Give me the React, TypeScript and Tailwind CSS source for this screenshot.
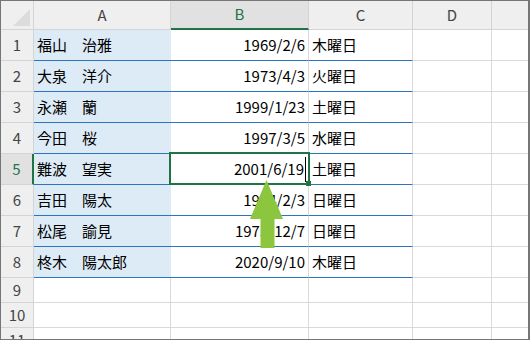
import React from 'react';

const FONT = "font-['Noto_Sans_CJK_JP','Noto_Sans',sans-serif]";

const rows = [
  { name: '福山　治雅', date: '1969/2/6', day: '木曜日' },
  { name: '大泉　洋介', date: '1973/4/3', day: '火曜日' },
  { name: '永瀬　蘭', date: '1999/1/23', day: '土曜日' },
  { name: '今田　桜', date: '1997/3/5', day: '水曜日' },
  { name: '難波　望実', date: '2001/6/19', day: '土曜日' },
  { name: '吉田　陽太', date: '1974/2/3', day: '日曜日' },
  { name: '松尾　諭見', date: '1975/12/7', day: '日曜日' },
  { name: '柊木　陽太郎', date: '2020/9/10', day: '木曜日' },
];

function HeaderRow() {
  return (
    <div className="flex h-[29px] shrink-0 bg-[#efefef] text-[15px] text-[#444]">
      <div className="w-[33px] shrink-0 border-r border-b border-[#d4d4d4] flex items-end justify-end pr-[2px] pb-[2px]">
        <svg width="18" height="18" viewBox="0 0 18 18">
          <polygon points="17,0 0,17 17,17" fill="#dcdcdc" />
        </svg>
      </div>
      <div className="w-[137px] shrink-0 border-r border-b border-[#d4d4d4] flex items-center justify-center">A</div>
      <div className="w-[138px] shrink-0 bg-[#e1e1e1] border-r border-r-[#d4d4d4] border-b-2 border-b-[#217346] text-[#217346] flex items-center justify-center">B</div>
      <div className="w-[104px] shrink-0 border-r border-b border-[#d4d4d4] flex items-center justify-center">C</div>
      <div className="w-[79px] shrink-0 border-r border-b border-[#d4d4d4] flex items-center justify-center">D</div>
      <div className="w-[80px] shrink-0 border-b border-[#d4d4d4] flex items-center justify-center">E</div>
    </div>
  );
}

function DataRow({ idx, name, date, day }: { idx: number; name: string; date: string; day: string }) {
  const active = idx === 5;
  return (
    <div className="flex h-[31px] shrink-0 text-[15px]">
      <div
        className={
          active
            ? 'w-[33px] shrink-0 bg-[#e1e1e1] text-[#217346] border-b border-b-[#d4d4d4] border-r-2 border-r-[#217346] flex items-center justify-center'
            : 'w-[33px] shrink-0 bg-[#efefef] text-[#444] border-r border-b border-[#d4d4d4] flex items-center justify-center'
        }
      >
        {idx}
      </div>
      <div className="w-[137px] shrink-0 bg-[#ddebf7] border-b border-b-[#2a74c0] pl-[3px] flex items-center text-black whitespace-pre">
        {name}
      </div>
      <div
        className={
          active
            ? 'w-[138px] shrink-0 border-r border-r-[#d9d9d9] border-b border-b-[#2a74c0] pr-[2px] flex items-center justify-end text-black'
            : 'w-[138px] shrink-0 border-r border-r-[#d9d9d9] border-b border-b-[#2a74c0] pr-[3px] flex items-center justify-end text-black'
        }
      >
        {date}
        {active && <span className="ml-[1px] w-px h-[25px] bg-black" />}
      </div>
      <div className="w-[104px] shrink-0 border-r border-r-[#d9d9d9] border-b border-b-[#2a74c0] pl-[3px] flex items-center text-black">
        {day}
      </div>
      <div className="w-[79px] shrink-0 border-r border-b border-[#d9d9d9]" />
      <div className="w-[80px] shrink-0 border-b border-[#d9d9d9]" />
    </div>
  );
}

function EmptyRow({ idx }: { idx: number }) {
  return (
    <div className="flex h-[25px] shrink-0 text-[15px]">
      <div className="w-[33px] shrink-0 bg-[#efefef] text-[#444] border-r border-b border-[#d4d4d4] flex items-center justify-center">
        {idx}
      </div>
      <div className="w-[137px] shrink-0 border-r border-b border-[#d9d9d9]" />
      <div className="w-[138px] shrink-0 border-r border-b border-[#d9d9d9]" />
      <div className="w-[104px] shrink-0 border-r border-b border-[#d9d9d9]" />
      <div className="w-[79px] shrink-0 border-r border-b border-[#d9d9d9]" />
      <div className="w-[80px] shrink-0 border-b border-[#d9d9d9]" />
    </div>
  );
}

export default function App() {
  return (
    <div
      className={`${FONT} relative w-[530px] h-[340px] overflow-hidden bg-white border-t border-l border-b border-r-2 border-[#767676] flex flex-col`}
    >
      <HeaderRow />
      {rows.map((r, i) => (
        <DataRow key={i} idx={i + 1} {...r} />
      ))}
      <EmptyRow idx={9} />
      <EmptyRow idx={10} />
      <EmptyRow idx={11} />

      {/* selected cell B5 */}
      <div className="absolute left-[168px] top-[151px] w-[141px] h-[33px] border-2 border-[#217346] pointer-events-none" />
      <div className="absolute left-[305px] top-[180px] w-[5px] h-[5px] bg-[#217346]" />

      {/* arrow */}
      <svg className="absolute left-[248px] top-[178px]" width="36" height="69" viewBox="0 0 36 69">
        <polygon points="17.5,1 1,40 11.5,40 11.5,69 25.5,69 25.5,40 34,40" fill="#8cc63e" />
      </svg>
    </div>
  );
}
